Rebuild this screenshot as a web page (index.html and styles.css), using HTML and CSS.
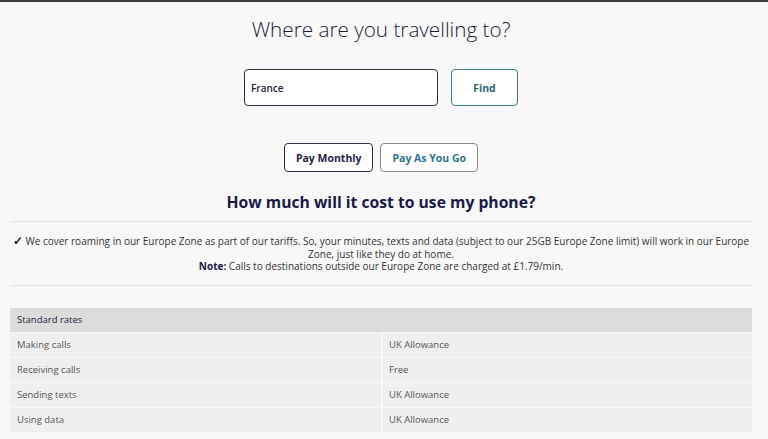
FILE: index.html
```html
<!DOCTYPE html>
<html lang="en">
<head>
<meta charset="utf-8">
<title>Roaming</title>
<link rel="stylesheet" href="styles.css">
</head>
<body>
<div class="topbar"></div>
<main class="page">
  <h1 class="title">Where are you travelling to?</h1>
  <form class="search">
    <div class="input">France</div>
    <button type="button" class="find">Find</button>
  </form>
  <div class="tabs">
    <button type="button" class="tab active">Pay Monthly</button>
    <button type="button" class="tab">Pay As You Go</button>
  </div>
  <h2 class="subtitle">How much will it cost to use my phone?</h2>
  <div class="info">
    <p><span class="tick">✓</span> We cover roaming in our Europe Zone as part of our tariffs. So, your minutes, texts and data (subject to our 25GB Europe Zone limit) will work in our Europe Zone, just like they do at home.<br><b>Note:</b> Calls to destinations outside our Europe Zone are charged at £1.79/min.</p>
  </div>
  <table class="rates">
    <thead>
      <tr><th colspan="2">Standard rates</th></tr>
    </thead>
    <tbody>
      <tr><td>Making calls</td><td>UK Allowance</td></tr>
      <tr><td>Receiving calls</td><td>Free</td></tr>
      <tr><td>Sending texts</td><td>UK Allowance</td></tr>
      <tr><td>Using data</td><td>UK Allowance</td></tr>
    </tbody>
  </table>
</main>
</body>
</html>
```
FILE: styles.css
```css
html, body {
  margin: 0;
  padding: 0;
  background: #f8f8f8;
  font-family: "Open Sans", "Noto Sans", sans-serif;
  color: #333;
}
.topbar {
  height: 2px;
  background: #3f3f3f;
}
.page {
  width: 742px;
  margin-left: 10px;
  display: flex;
  flex-direction: column;
  align-items: center;
}
.title {
  margin: 13px 0 0;
  font-size: 20.7px;
  font-weight: 300;
  color: #1e1e3c;
  line-height: 28px;
}
.search {
  display: flex;
  gap: 13px;
  margin: 26px 0 0;
}
.input {
  box-sizing: border-box;
  width: 194px;
  height: 37px;
  border: 1.5px solid #2e2e55;
  border-radius: 4px;
  background: #fff;
  padding: 0 6px;
  display: flex;
  align-items: center;
  font-size: 10px;
  font-weight: 600;
  color: #1e1e3c;
}
.find {
  box-sizing: border-box;
  width: 67px;
  height: 37px;
  border: 1.5px solid #3d7c8a;
  border-radius: 4px;
  background: #fff;
  font-family: inherit;
  font-size: 10.5px;
  font-weight: 700;
  color: #2c6475;
  cursor: pointer;
}
.tabs {
  display: flex;
  gap: 7px;
  margin: 37px 0 0;
}
.tab {
  box-sizing: border-box;
  height: 29px;
  padding: 0 11px;
  border: 1px solid #8a8a8a;
  border-radius: 4px;
  background: #fff;
  font-family: inherit;
  font-size: 10.5px;
  font-weight: 700;
  color: #2e7390;
}
.tab.active {
  border: 1.5px solid #2e2e55;
  color: #1e1e4a;
}
.subtitle {
  margin: 19px 0 0;
  font-size: 15.7px;
  font-weight: 700;
  color: #1a1a4a;
  line-height: 22px;
}
.info {
  align-self: stretch;
  margin-top: 8px;
  border-top: 1px solid #e4e4e4;
  border-bottom: 1px solid #e4e4e4;
  padding: 13px 0 12px;
}
.info p {
  margin: 0;
  text-align: center;
  font-size: 10px;
  line-height: 12.5px;
  color: #333;
}
.info .tick {
  font-size: 12px;
  font-weight: 700;
  color: #222;
}
.info b {
  color: #1a1a4a;
}
.rates {
  align-self: stretch;
  margin-top: 21px;
  border-collapse: separate;
  border-spacing: 0 1px;
  font-size: 9.5px;
  color: #555;
}
.rates th {
  background: #dcdcdc;
  text-align: left;
  font-weight: 400;
  color: #1e1e3c;
  height: 24px;
  padding: 0 7px;
}
.rates td {
  background: #efefef;
  height: 24px;
  padding: 0 6px;
  width: 50%;
}
.rates td:first-child {
  padding-left: 7px;
}
.rates td + td {
  border-left: 2px solid #f8f8f8;
}
```
